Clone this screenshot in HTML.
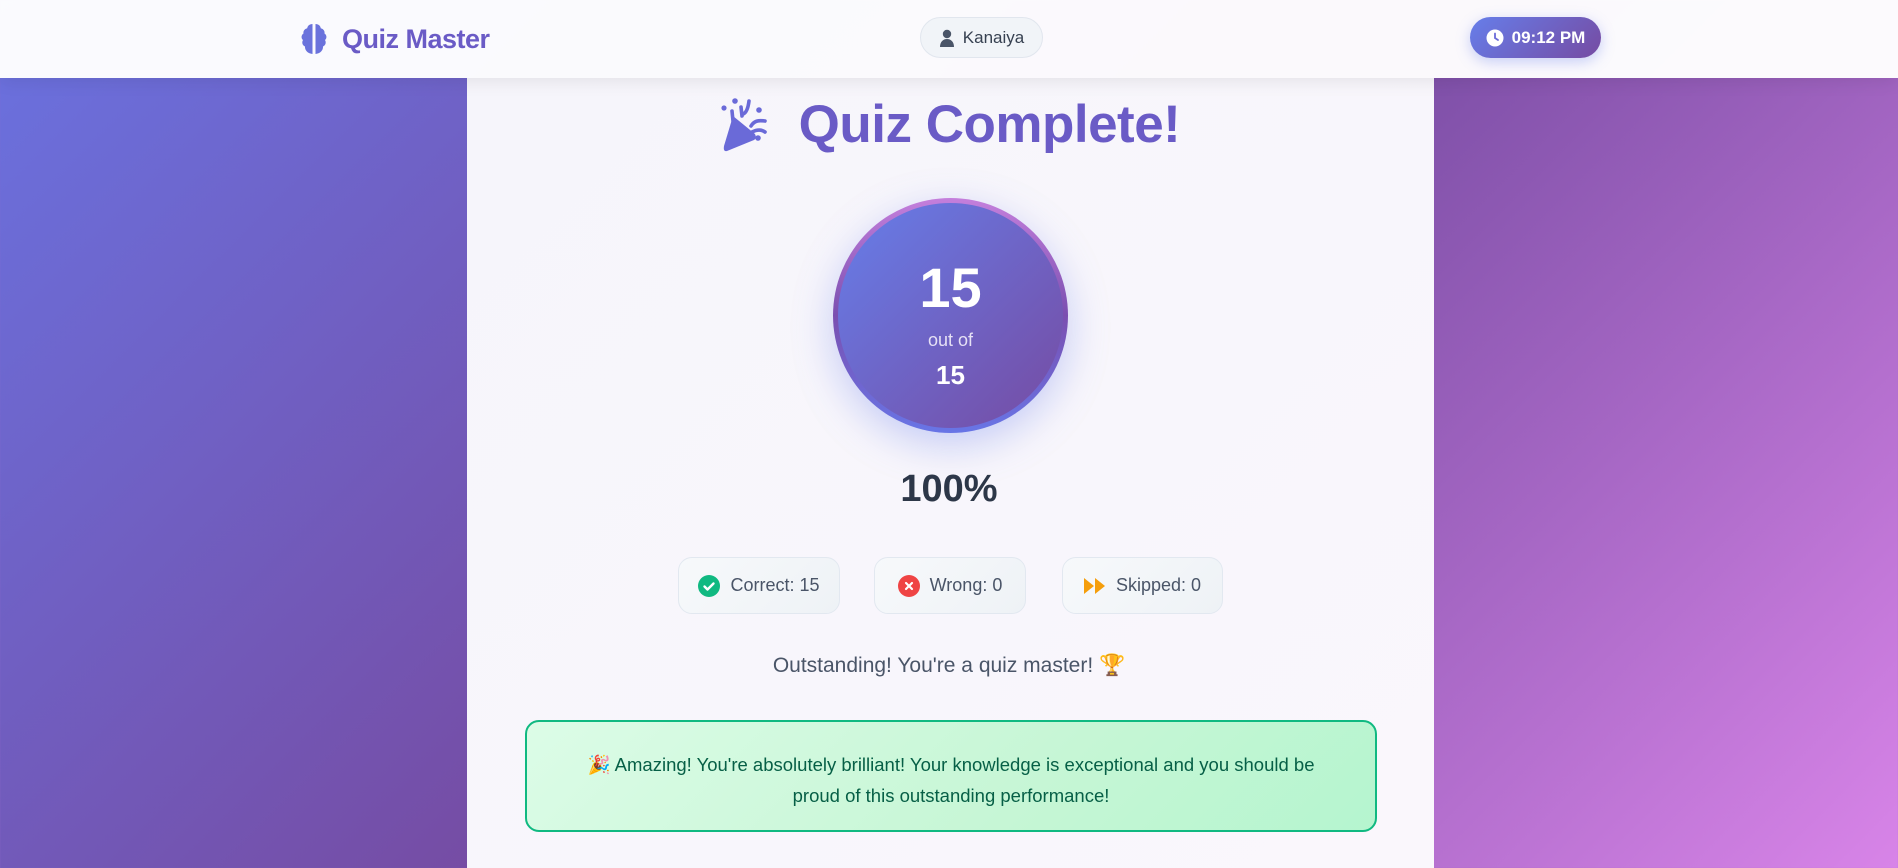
<!DOCTYPE html>
<html><head><meta charset="utf-8"><style>
*{margin:0;padding:0;box-sizing:border-box}
html,body{width:1898px;height:868px;overflow:hidden}
body{font-family:"Liberation Sans","DejaVu Sans",sans-serif;background:linear-gradient(135deg,#6a72e0 0%,#764ba2 50%,#d884e8 100%);position:relative}
.hdr{position:absolute;left:0;top:0;width:1898px;height:78px;background:rgba(255,255,255,0.97);box-shadow:0 4px 16px rgba(0,0,0,0.08);z-index:2}
.logo{position:absolute;left:298px;top:22px;display:flex;align-items:center;gap:12px}
.logo span{font-size:27px;font-weight:bold;color:#6a5bc6;letter-spacing:-0.5px}
.user{position:absolute;left:920px;top:17px;width:123px;height:41px;border-radius:21px;background:#f1f4f8;border:1px solid #e1e6ee;display:flex;align-items:center;justify-content:center;gap:8px;font-size:17px;color:#374151}
.time{position:absolute;left:1470px;top:17px;width:131px;height:41px;border-radius:21px;background:linear-gradient(135deg,#667eea,#764ba2);box-shadow:0 4px 14px rgba(102,126,234,0.35);display:flex;align-items:center;justify-content:center;gap:8px;font-size:17px;font-weight:bold;color:#fff}
.card{position:absolute;left:467px;top:78px;width:967px;height:830px;background:linear-gradient(135deg,#f6f5fb,#faf7fc);}
.title{position:absolute;width:967px;top:94px;font-size:53px;font-weight:bold;color:#6a5bc6;display:flex;justify-content:center;align-items:center;gap:26px;letter-spacing:-0.5px}
.circle{position:absolute;left:833px;top:198px;width:235px;height:235px;border-radius:50%;background:linear-gradient(180deg,#c47fdc,#7a4fb0 50%,#6875e6);padding:5px;box-shadow:0 12px 40px rgba(102,126,234,0.35);z-index:1}
.inner{width:100%;height:100%;border-radius:50%;background:linear-gradient(135deg,#667eea,#764ba2);color:#fff;text-align:center;position:relative}
.big{position:absolute;top:52px;width:100%;font-size:56px;font-weight:bold}
.of{position:absolute;top:127px;width:100%;font-size:18px;color:#e6e1f5}
.small{position:absolute;top:157px;width:100%;font-size:26px;font-weight:bold}
.pct{position:absolute;top:468px;left:0;width:1898px;text-align:center;font-size:38px;font-weight:bold;color:#2d3748}
.pill{position:absolute;top:557px;height:57px;border-radius:14px;background:linear-gradient(135deg,#f7f9fb,#eef2f6);border:1px solid #e2e8f0;display:flex;align-items:center;justify-content:center;gap:10px;font-size:18px;color:#4a5568}
.msg{position:absolute;top:654px;left:0;width:1898px;text-align:center;font-size:21px;color:#4a5568}
.box{position:absolute;left:525px;top:720px;width:852px;height:112px;border:2px solid #10b981;border-radius:14px;background:linear-gradient(135deg,#dcfce7,#c6f6d5 60%,#b5f5cf);color:#065f46;font-size:18.5px;line-height:31px;text-align:center;padding:27px 44px 0}
</style></head><body>
<div class="card"></div>
<div class="hdr">
 <div class="logo"><svg width="32" height="34" viewBox="0 0 32 34"><g fill="#6a72dc"><path d="M14.5 2c-3 0-5 2-5.3 4.3C6.5 7 5 9.3 5.5 11.5 3 13 3 16.5 5 18c-1.5 2.5-.5 5.5 2 6.5-.3 3.5 2.5 7 7.5 7.5z"/><path d="M17.5 2c3 0 5 2 5.3 4.3 2.7.7 4.2 3 3.7 5.2 2.5 1.5 2.5 5 .5 6.5 1.5 2.5.5 5.5-2 6.5.3 3.5-2.5 7-7.5 7.5z"/></g></svg><span>Quiz Master</span></div>
 <div class="user"><svg width="16" height="18" viewBox="0 0 16 18"><circle cx="8" cy="5" r="4.2" fill="#4a5568"/><path d="M1 18c0-5 3-8 7-8s7 3 7 8z" fill="#4a5568"/></svg>Kanaiya</div>
 <div class="time"><svg width="18" height="18" viewBox="0 0 18 18"><circle cx="9" cy="9" r="8.5" fill="#fff"/><path d="M9 4.5V9l3 2" stroke="#6a6ad8" stroke-width="1.8" fill="none" stroke-linecap="round"/></svg>09:12 PM</div>
</div>
<div class="title" style="left:467px"><svg width="52" height="58" viewBox="0 0 52 58"><g fill="#6a6ad8"><path d="M6 55 Q2 56 3 50 L12 20 L34 38 Q36 42 33 44 Z"/><circle cx="14" cy="5" r="2.8"/><circle cx="3" cy="12" r="2.6"/><circle cx="38" cy="14" r="2.8"/><circle cx="37" cy="42" r="2.8"/></g><g stroke="#6a6ad8" stroke-width="3.6" fill="none" stroke-linecap="round"><path d="M11 15 l1 10"/><path d="M20 11 l1 9"/><path d="M28 5 c-1 8 -3 12 -6 13"/><path d="M30 30 c3 -5 7 -6 14 -5"/><path d="M31 36 c4 -2 9 -3 13 0"/></g></svg><span>Quiz Complete!</span></div>
<div class="circle"><div class="inner"><div class="big">15</div><div class="of">out of</div><div class="small">15</div></div></div>
<div class="pct">100%</div>
<div class="pill" style="left:678px;width:162px"><svg width="22" height="22" viewBox="0 0 22 22"><circle cx="11" cy="11" r="11" fill="#10b981"/><path d="M6.5 11.5l3 3 6-6" stroke="#fff" stroke-width="2.4" fill="none" stroke-linecap="round" stroke-linejoin="round"/></svg>Correct: 15</div>
<div class="pill" style="left:874px;width:152px"><svg width="22" height="22" viewBox="0 0 22 22"><circle cx="11" cy="11" r="11" fill="#ef4444"/><path d="M8 8l6 6M14 8l-6 6" stroke="#fff" stroke-width="2.2" stroke-linecap="round"/></svg>Wrong: 0</div>
<div class="pill" style="left:1062px;width:161px"><svg width="22" height="18" viewBox="0 0 22 18"><path d="M0 1l10 8-10 8zM11 1l10 8-10 8z" fill="#f59e0b"/></svg>Skipped: 0</div>
<div class="msg">Outstanding! You're a quiz master! 🏆</div>
<div class="box">🎉 Amazing! You're absolutely brilliant! Your knowledge is exceptional and you should be proud of this outstanding performance!</div>
</body></html>
